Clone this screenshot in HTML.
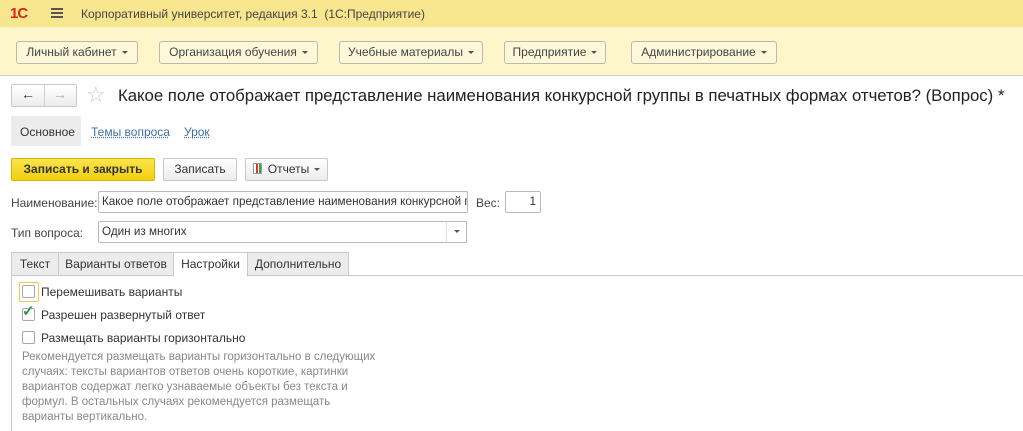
<!DOCTYPE html>
<html><head><meta charset="utf-8"><style>
*{box-sizing:border-box;margin:0;padding:0}
body{width:1023px;height:431px;overflow:hidden;background:#fff;font-family:"Liberation Sans",Arial,sans-serif;font-size:12px;color:#333;position:relative}
.a{position:absolute;white-space:nowrap}
.top{left:0;top:0;width:1023px;height:27px;background:#f8e68f}
.band{left:0;top:27px;width:1023px;height:49px;background:#fdf6cb;border-bottom:1px solid #d6d2b8}
.mb{top:41px;height:23px;border:1px solid #bdb9a6;border-radius:3px;background:#fdf8da;color:#444;font-size:12px;line-height:21px;text-align:center}
.tri{display:inline-block;border-left:3px solid transparent;border-right:3px solid transparent;border-top:3px solid #555;vertical-align:middle;margin-left:5px}
.btn{height:23px;border:1px solid #c8c8c8;border-radius:2px;background:linear-gradient(#fff,#ececec);line-height:21px;text-align:center;color:#333;font-size:12px}
.in{height:22px;border:1px solid #b9b9b9;border-radius:2px;background:#fff;line-height:20px;padding-left:3px;color:#333;overflow:hidden;font-size:11.7px}
.tab{top:252px;height:24px;border:1px solid #c9c9c9;background:#ececec;line-height:22px;text-align:center;font-size:12px;color:#333}
.cb{width:13px;height:13px;border:1px solid #a8a8a8;border-radius:2px;background:#fff}
</style></head><body>
<div class="a top"></div>
<div class="a" style="left:10px;top:5px;color:#d9261c;font-weight:bold;font-size:15px;letter-spacing:-1px">1С</div>
<div class="a" style="left:51px;top:8px;width:12px;height:2px;background:#555;box-shadow:0 4px 0 #555,0 8px 0 #555"></div>
<div class="a" style="left:81px;top:7px;color:#444;font-size:12px">Корпоративный университет, редакция 3.1&nbsp; (1С:Предприятие)</div>
<div class="a band"></div>
<div class="a mb" style="left:16px;width:122px">Личный кабинет<span class="tri"></span></div>
<div class="a mb" style="left:159px;width:159px">Организация обучения<span class="tri"></span></div>
<div class="a mb" style="left:339px;width:144px">Учебные материалы<span class="tri"></span></div>
<div class="a mb" style="left:504px;width:102px">Предприятие<span class="tri"></span></div>
<div class="a mb" style="left:631px;width:146px">Администрирование<span class="tri"></span></div>
<div class="a btn" style="left:11px;top:84px;width:66px;height:23px"></div>
<div class="a" style="left:44px;top:85px;width:1px;height:21px;background:#d0d0d0"></div>
<div class="a" style="left:21px;top:86px;font-size:14px;color:#333">&#x2190;</div>
<div class="a" style="left:53px;top:86px;font-size:14px;color:#aaa">&#x2192;</div>
<div class="a" style="left:86px;top:82px;font-size:22px;color:#ccc">☆</div>
<div class="a" style="left:118px;top:86px;font-size:16.8px;color:#222;letter-spacing:-0.03px">Какое поле отображает представление наименования конкурсной группы в печатных формах отчетов? (Вопрос) *</div>
<div class="a" style="left:11px;top:116px;width:70px;height:30px;background:#ececec;border-radius:2px"></div>
<div class="a" style="left:20px;top:125px;color:#333">Основное</div>
<div class="a" style="left:91px;top:125px;color:#3f6ea8;text-decoration:underline dotted">Темы вопроса</div>
<div class="a" style="left:184px;top:125px;color:#3f6ea8;text-decoration:underline dotted">Урок</div>
<div class="a btn" style="left:11px;top:158px;width:144px;background:linear-gradient(#fbe34c,#f2cf10);border-color:#d8b600;font-weight:bold;color:#333">Записать и закрыть</div>
<div class="a btn" style="left:163px;top:158px;width:74px">Записать</div>
<div class="a btn" style="left:245px;top:158px;width:83px"><span style="display:inline-block;width:9px;height:11px;border:1px solid #999;vertical-align:-1px;margin-right:6px;background:linear-gradient(90deg,#fff 2px,#d33 2px,#d33 4px,#fff 4px,#fff 5px,#3a3 5px)"></span>Отчеты<span class="tri"></span></div>
<div class="a" style="left:11px;top:196px;color:#444">Наименование:</div>
<div class="a in" style="left:98px;top:191px;width:370px">Какое поле отображает представление наименования конкурсной г</div>
<div class="a" style="left:476px;top:196px;color:#444">Вес:</div>
<div class="a in" style="left:505px;top:191px;width:36px;text-align:right;padding-right:4px">1</div>
<div class="a" style="left:11px;top:226px;color:#444">Тип вопроса:</div>
<div class="a in" style="left:98px;top:221px;width:369px">Один из многих</div>
<div class="a" style="left:446px;top:222px;width:1px;height:20px;background:#ddd"></div>
<div class="a" style="left:454px;top:230px;border-left:3px solid transparent;border-right:3px solid transparent;border-top:3px solid #555"></div>
<div class="a" style="left:11px;top:275px;width:1012px;height:1px;background:#c9c9c9"></div>
<div class="a" style="left:11px;top:275px;width:1px;height:156px;background:#c9c9c9"></div>
<div class="a tab" style="left:11px;width:48px">Текст</div>
<div class="a tab" style="left:58px;width:116px">Варианты ответов</div>
<div class="a tab" style="left:173px;width:75px;background:#fff;border-bottom-color:#fff;height:25px">Настройки</div>
<div class="a tab" style="left:247px;width:102px">Дополнительно</div>
<div class="a" style="left:19px;top:282px;width:20px;height:20px;border:1px solid #f0c84a;border-radius:2px"></div>
<div class="a cb" style="left:22px;top:285px"></div>
<div class="a" style="left:41px;top:285px;color:#333">Перемешивать варианты</div>
<div class="a cb" style="left:22px;top:308px"></div>
<div class="a" style="left:22px;top:302px;color:#2a9a3a;font-size:15px;font-weight:bold">✓</div>
<div class="a" style="left:41px;top:308px;color:#333">Разрешен развернутый ответ</div>
<div class="a cb" style="left:22px;top:331px"></div>
<div class="a" style="left:41px;top:331px;color:#333">Размещать варианты горизонтально</div>
<div class="a" style="left:22px;top:350px;color:#888;font-size:11.5px;line-height:15px;white-space:normal;width:370px">Рекомендуется размещать варианты горизонтально в следующих<br>случаях: тексты вариантов ответов очень короткие, картинки<br>вариантов содержат легко узнаваемые объекты без текста и<br>формул. В остальных случаях рекомендуется размещать<br>варианты вертикально.</div>
</body></html>
